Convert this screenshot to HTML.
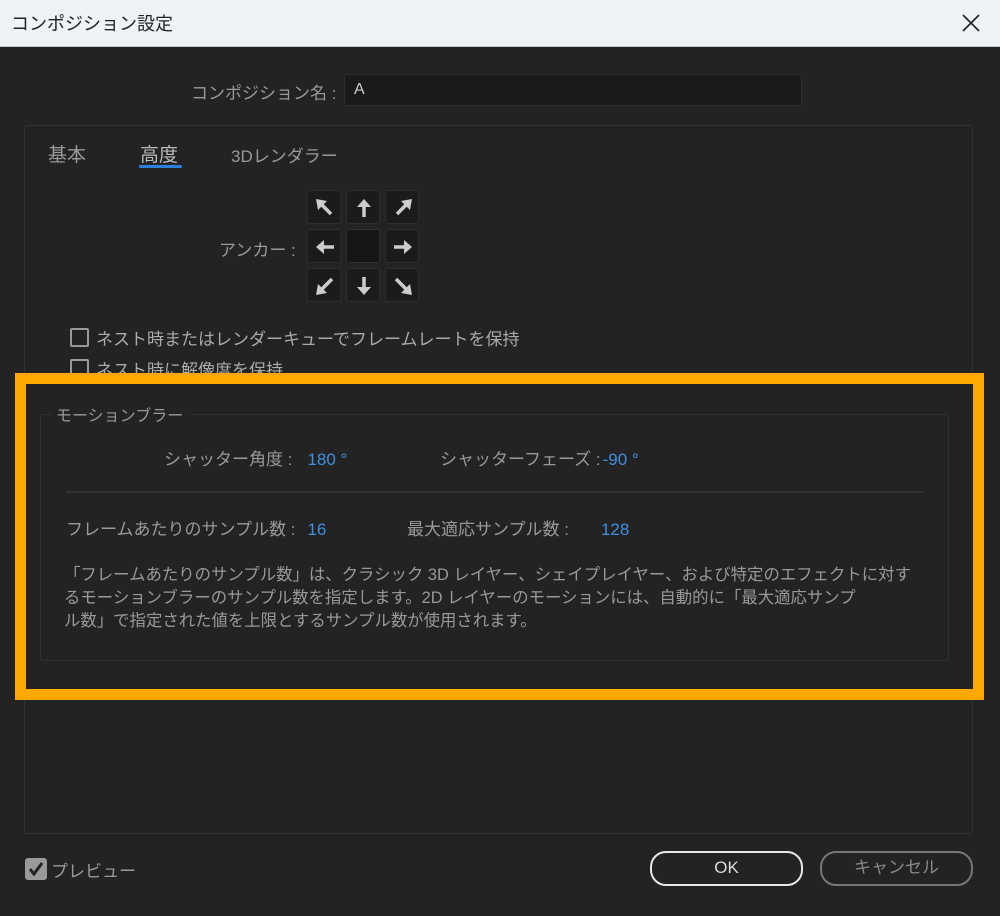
<!DOCTYPE html>
<html><head><meta charset="utf-8"><style>
*{margin:0;padding:0;box-sizing:border-box}
body{width:1000px;height:916px;background:#232323;position:relative;overflow:hidden;font-family:"Liberation Sans","Noto Sans CJK JP",sans-serif;color:#a8a8a8}
.a{position:absolute;white-space:nowrap}
.blue{color:#3f8fe0}
.btn{position:absolute;border-radius:16px;text-align:center;font-size:17px;line-height:30px}
.cell{position:absolute;width:34px;height:34px;background:#1b1b1b;border:1px solid #2e2e2e;border-radius:3px}
.cell svg{position:absolute;left:5px;top:5px}
</style></head><body>
<div class="a" style="left:0;top:0;width:1000px;height:47px;background:#eef3f8;border-bottom:1px solid #c8c8c8"></div>
<div class="a" style="left:11px;top:10px;font-size:18px;color:#222">コンポジション設定</div>
<svg class="a" style="left:961px;top:13px" width="20" height="20"><path d="M2 2L18 18M18 2L2 18" stroke="#222" stroke-width="1.6"/></svg>

<div class="a" style="left:191px;top:79px;font-size:17px;color:#999">コンポジション名 :</div>
<div class="a" style="left:344px;top:74px;width:458px;height:32px;background:#1a1a1a;border:1px solid #2e2e2e;border-radius:3px"></div>
<div class="a" style="left:354px;top:81px;font-size:16px;color:#ccc">A</div>

<div class="a" style="left:24px;top:125px;width:949px;height:709px;border:1px solid #333;border-radius:3px"></div>
<div class="a" style="left:48px;top:140px;font-size:19px;color:#999">基本</div>
<div class="a" style="left:140px;top:140px;font-size:19px;color:#bbb">高度</div>
<div class="a" style="left:139px;top:165px;width:43px;height:3px;background:#2d7fdc;border-radius:2px"></div>
<div class="a" style="left:231px;top:142px;font-size:17px;color:#999">3Dレンダラー</div>

<div class="a" style="left:219px;top:236px;font-size:17px;color:#999">アンカー :</div>
<div class="cell" style="left:307px;top:190px"><svg width="24" height="24"><path d="M5 5L18 18" stroke="#ccc" stroke-width="3.5"/><path d="M3 3L14 5L5 14Z" fill="#ccc"/></svg></div>
<div class="cell" style="left:346px;top:190px"><svg width="24" height="24"><path d="M12 21V9" stroke="#ccc" stroke-width="3.5"/><path d="M5 11L12 3L19 11Z" fill="#ccc"/></svg></div>
<div class="cell" style="left:385px;top:190px"><svg width="24" height="24"><path d="M19 5L6 18" stroke="#ccc" stroke-width="3.5"/><path d="M21 3L10 5L19 14Z" fill="#ccc"/></svg></div>
<div class="cell" style="left:307px;top:229px"><svg width="24" height="24"><path d="M21 12H9" stroke="#ccc" stroke-width="3.5"/><path d="M11 5L3 12L11 19Z" fill="#ccc"/></svg></div>
<div class="cell" style="left:346px;top:229px;background:#161616"></div>
<div class="cell" style="left:385px;top:229px"><svg width="24" height="24"><path d="M3 12H15" stroke="#ccc" stroke-width="3.5"/><path d="M13 5L21 12L13 19Z" fill="#ccc"/></svg></div>
<div class="cell" style="left:307px;top:268px"><svg width="24" height="24"><path d="M19 5L6 18" stroke="#ccc" stroke-width="3.5"/><path d="M3 21L5 10L14 19Z" fill="#ccc"/></svg></div>
<div class="cell" style="left:346px;top:268px"><svg width="24" height="24"><path d="M12 3V15" stroke="#ccc" stroke-width="3.5"/><path d="M5 13L12 21L19 13Z" fill="#ccc"/></svg></div>
<div class="cell" style="left:385px;top:268px"><svg width="24" height="24"><path d="M5 5L18 18" stroke="#ccc" stroke-width="3.5"/><path d="M21 21L19 10L10 19Z" fill="#ccc"/></svg></div>

<div class="a" style="left:70px;top:328px;width:19px;height:19px;border:2px solid #999;border-radius:2px"></div>
<div class="a" style="left:96px;top:325px;font-size:17px;color:#aaa">ネスト時またはレンダーキューでフレームレートを保持</div>
<div class="a" style="left:70px;top:359px;width:19px;height:19px;border:2px solid #999;border-radius:2px"></div>
<div class="a" style="left:96px;top:356px;font-size:17px;color:#aaa">ネスト時に解像度を保持</div>

<div class="a" style="left:15px;top:373px;width:969px;height:327px;border:11px solid #ffa800;background:#232323"></div>
<div class="a" style="left:40px;top:414px;width:909px;height:247px;border:1px solid #303030;border-radius:3px"></div>
<div class="a" style="left:52px;top:402px;padding:0 8px 0 4px;background:#232323;font-size:16px;color:#999">モーションブラー</div>
<div class="a" style="left:164px;top:445px;font-size:17px;color:#999">シャッター角度 :<span class="blue" style="margin-left:15px">180 °</span></div>
<div class="a" style="left:440px;top:445px;font-size:17px;color:#999">シャッターフェーズ :<span class="blue" style="margin-left:2px">-90 °</span></div>
<div class="a" style="left:66px;top:491px;width:858px;height:2px;background:#333"></div>
<div class="a" style="left:66px;top:515px;font-size:17px;color:#999">フレームあたりのサンプル数 :<span class="blue" style="margin-left:12px">16</span></div>
<div class="a" style="left:407px;top:515px;font-size:17px;color:#999">最大適応サンプル数 :<span class="blue" style="margin-left:32px">128</span></div>
<div class="a" style="left:64px;top:564px;font-size:16.4px;line-height:23px;color:#999">「フレームあたりのサンプル数」は、クラシック 3D レイヤー、シェイプレイヤー、および特定のエフェクトに対す<br>るモーションブラーのサンプル数を指定します。2D レイヤーのモーションには、自動的に「最大適応サンプ<br>ル数」で指定された値を上限とするサンプル数が使用されます。</div>

<div class="a" style="left:25px;top:858px;width:22px;height:22px;background:#999;border-radius:3px"></div>
<svg class="a" style="left:27px;top:860px" width="18" height="18"><path d="M3 9L7 14L15 3" stroke="#222" stroke-width="3" fill="none"/></svg>
<div class="a" style="left:51px;top:857px;font-size:17px;color:#999">プレビュー</div>
<div class="btn" style="left:650px;top:851px;width:153px;height:35px;border:2px solid #e8e8e8;color:#ddd">OK</div>
<div class="btn" style="left:820px;top:851px;width:153px;height:35px;border:2px solid #777;color:#888">キャンセル</div>
</body></html>
